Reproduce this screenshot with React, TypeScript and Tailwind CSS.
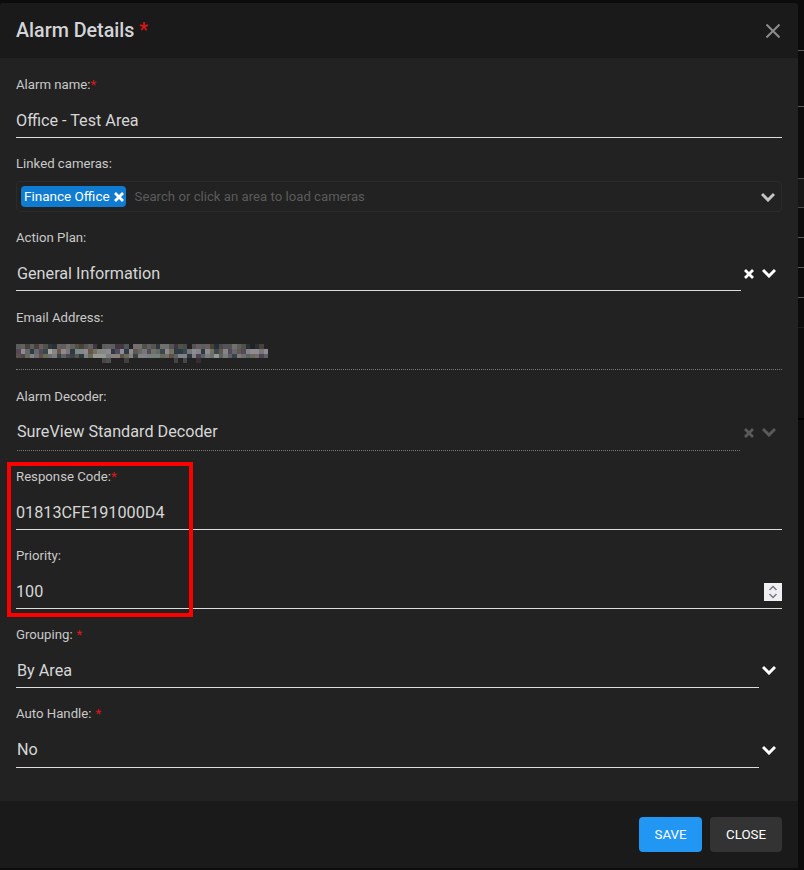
const backdropLines = [
  { key: 'a', className: 'h-[51px] border-b border-[#5a5a5a]' },
  { key: 'b', className: 'h-[56px] border-b border-[#5a5a5a]' },
  { key: 'c', className: 'h-[72px] border-b border-[#4a4a4a]' },
  { key: 'd', className: 'h-[29px] border-b border-[#4a4a4a] bg-[#161616]' },
  { key: 'e', className: 'h-[30px] border-b border-[#5a5a5a]' },
  { key: 'f', className: 'h-[30px] border-b border-[#5a5a5a]' },
  { key: 'g', className: 'h-[30px] border-b border-[#5a5a5a]' },
  { key: 'h', className: 'h-[30px] border-b border-[#1c1c1c]' },
  { key: 'i', className: 'h-[92px] border-b-2 border-[#000000]' },
];

function Chevron({ className }: { className: string }) {
  return (
    <svg className={className} width="14" height="10" viewBox="0 0 14 10" fill="none" stroke="currentColor" strokeWidth="3">
      <path d="M1 2L7 8L13 2" />
    </svg>
  );
}

function Cross({ className }: { className: string }) {
  return (
    <svg className={className} width="10" height="10" viewBox="0 0 10 10" fill="none" stroke="currentColor" strokeWidth="2.8">
      <path d="M1 1L9 9M9 1L1 9" />
    </svg>
  );
}

function Label({ text, required, spaced }: { text: string; required?: boolean; spaced?: boolean }) {
  return (
    <div className="flex h-[20px] items-center pt-[2px] text-[13.2px] text-[#c9c9c9]">
      <span>{text}</span>
      {required && <span className={spaced ? 'ml-1 text-[#e01515]' : 'text-[#e01515]'}>*</span>}
    </div>
  );
}

function TextField({ label, value, required }: { label: string; value: string; required?: boolean }) {
  return (
    <div className="mb-[15px]">
      <Label text={label} required={required} />
      <div className="flex h-[44px] items-end border-b border-[#dcdcdc] pb-[7px] text-[16.2px] leading-[19px] text-[#d6d6d6]">
        {value}
      </div>
    </div>
  );
}

function SelectField({ label, value, last }: { label: string; value: string; last?: boolean }) {
  return (
    <div className="mb-[15px]">
      <Label text={label} required spaced />
      <div className="flex items-start">
        <div
          className={`flex w-[743px] items-end border-b border-[#dcdcdc] pl-px text-[16.2px] leading-[19px] text-[#d6d6d6] ${
            last ? 'h-[45px] pb-[8px]' : 'h-[44px] pb-[7px]'
          }`}
        >
          {value}
        </div>
        <Chevron className={`ml-[3px] text-white ${last ? 'mt-[22px]' : 'mt-[21px]'}`} />
      </div>
    </div>
  );
}

// pixelated email address, same as the blurred area in the source picture
function EmailMosaic() {
  const tones = ['#77777a', '#858585', '#63686c', '#94898a', '#39474f', '#72725f', '#54485a', '#a5a5a0', '#2c3a45', '#65564a', '#7e8a88', '#8c8c92'];
  const rows = [
    { y: 0, h: 5, chance: 0.9, opacity: 0.6 },
    { y: 5, h: 5, chance: 1, opacity: 1 },
    { y: 10, h: 4, chance: 1, opacity: 0.9 },
    { y: 14, h: 5, chance: 0.14, opacity: 0.35 },
  ];
  let seed = 20231;
  const next = () => {
    seed = (seed * 16807) % 2147483647;
    return seed / 2147483647;
  };
  const cells = [];
  for (const row of rows) {
    for (let col = 0; col < 56; col++) {
      const on = next() < row.chance;
      const tone = tones[Math.floor(next() * tones.length)];
      if (on) {
        cells.push(
          <rect key={`${row.y}-${col}`} x={col * 4.5} y={row.y} width={4.5} height={row.h} fill={tone} opacity={row.opacity} />,
        );
      }
    }
  }
  return (
    <svg width="252" height="19" viewBox="0 0 252 19" shapeRendering="crispEdges">
      {cells}
    </svg>
  );
}

export default function App() {
  return (
    <div className="flex h-[870px] w-[804px] overflow-hidden bg-[#0c0c0c] font-['Roboto',sans-serif]">
      <div className="relative mt-[3px] flex h-[865px] w-[798px] flex-col rounded-t-[4px] bg-[#222222]">
        {/* Header */}
        <div className="flex h-[55px] shrink-0 items-center justify-between rounded-t-[4px] bg-[#1a1a1a] pl-4 pr-[18px]">
          <h2 className="text-[19.7px] font-medium text-[#d4d4d8]">
            Alarm Details <span className="text-[#e01515]">*</span>
          </h2>
          <svg width="14" height="14" viewBox="0 0 14 14" fill="none" stroke="#8c8c8c" strokeWidth="2">
            <path d="M0.5 0.5L13.5 13.5M13.5 0.5L0.5 13.5" />
          </svg>
        </div>

        {/* Form */}
        <div className="flex-1 pl-4 pr-4 pt-[16px]">
          <TextField label="Alarm name:" value="Office - Test Area" required />

          <div className="mb-[15px]">
            <Label text="Linked cameras:" />
            <div className="mt-2 flex h-[31px] items-center rounded-[4px] border border-[#2b2b2b] pl-1 pr-[6px]">
              <span className="flex h-[21px] items-center gap-[4px] rounded-[4px] bg-[#0f7bd1] pl-[3px] pr-[2px] text-[13.5px] text-white">
                Finance Office
                <Cross className="text-white" />
              </span>
              <span className="ml-[9px] text-[13.2px] text-[#5b5b5b]">Search or click an area to load cameras</span>
              <Chevron className="ml-auto text-[#c4c4c4]" />
            </div>
          </div>

          <div className="mb-[16px]">
            <Label text="Action Plan:" />
            <div className="flex items-start">
              <div className="flex h-[44px] w-[725px] items-end border-b border-[#dcdcdc] pb-[7px] pl-px text-[16.2px] leading-[19px] text-[#d6d6d6]">
                General Information
              </div>
              <Cross className="ml-[3px] mt-[22px] text-white" />
              <Chevron className="ml-[8px] mt-[21px] text-white" />
            </div>
          </div>

          <div className="mb-[16px]">
            <Label text="Email Address:" />
            <div className="flex h-[43px] items-end border-b border-dotted border-[#777777] pb-[6px]">
              <EmailMosaic />
            </div>
          </div>

          <div className="mb-[15px]">
            <Label text="Alarm Decoder:" />
            <div className="flex items-start">
              <div className="ml-px flex h-[45px] w-[723px] items-end border-b border-dotted border-[#777777] pb-[9px] text-[16.2px] leading-[19px] text-[#d6d6d6]">
                SureView Standard Decoder
              </div>
              <Cross className="ml-[4px] mt-[22px] text-[#5a5a5a]" />
              <Chevron className="ml-[8px] mt-[21px] text-[#5a5a5a]" />
            </div>
          </div>

          <TextField label="Response Code:" value="01813CFE191000D4" required />

          <div className="mb-[15px]">
            <Label text="Priority:" />
            <div className="flex h-[44px] items-end justify-between border-b border-[#dcdcdc] pb-[7px] text-[16.2px] leading-[19px] text-[#d6d6d6]">
              100
              <span className="flex h-[18px] w-[18px] flex-col items-center justify-center bg-[#efeff4]">
                <svg width="10" height="14" viewBox="0 0 10 14" fill="none" stroke="#77777f" strokeWidth="1.5">
                  <path d="M1.5 5L5 1.5L8.5 5M1.5 9L5 12.5L8.5 9" />
                </svg>
              </span>
            </div>
          </div>

          <SelectField label="Grouping:" value="By Area" />
          <SelectField label="Auto Handle:" value="No" last />
        </div>

        {/* Footer */}
        <div className="flex h-[67px] shrink-0 items-start justify-end gap-2 bg-[#1a1a1a] pr-4 pt-4">
          <button className="h-[35px] w-[63px] rounded-[4px] bg-[#2196f3] text-[13.3px] text-white">SAVE</button>
          <button className="h-[35px] w-[72px] rounded-[4px] bg-[#333333] text-[13.3px] text-white">CLOSE</button>
        </div>

        {/* Annotation over the screenshot */}
        <div className="absolute left-[7px] top-[459px] h-[155px] w-[186px] border-4 border-[#ff0000]" />
      </div>

      {/* Page behind the dialog */}
      <div className="w-[6px] shrink-0">
        {backdropLines.map((line) => (
          <div key={line.key} className={line.className} />
        ))}
      </div>
    </div>
  );
}
